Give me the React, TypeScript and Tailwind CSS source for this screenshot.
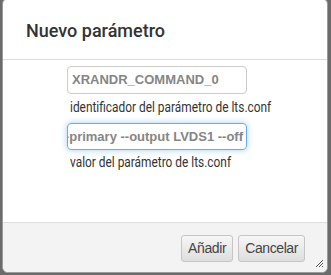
const App = () => {
  return (
    <div className="w-[331px] h-[275px] bg-[#6b6b6b] relative overflow-hidden" style={{ fontFamily: "Roboto, 'Liberation Sans', sans-serif" }}>
      <div className="absolute left-[2px] top-[-2px] w-[326px] h-[275px] bg-white border border-[#9a9a9a] rounded-[6px] flex flex-col overflow-hidden">
        <div className="h-[61px] border-b border-[#dddddd] flex items-center px-[23px] pt-[2px]">
          <h3 className="text-[18px] text-[#333333] font-medium">Nuevo parámetro</h3>
        </div>
        <div className="flex-1 pl-[64px] pt-[6px]">
          <div className="w-[180px] h-[28px] border border-[#cccccc] rounded-[4px] flex items-center px-[4px] text-[13px] font-bold text-[#858585]" style={{ fontFamily: "'Liberation Sans', Arial, sans-serif" }}>
            XRANDR_COMMAND_0
          </div>
          <p className="text-[14.5px] text-[#333333] mt-[5px] ml-[3px] leading-[18px] whitespace-nowrap origin-left scale-x-[0.82]">identificador del parámetro de lts.conf</p>
          <div className="mt-[6px] w-[180px] h-[27px] border border-[#66afe9] rounded-[4px] shadow-[0_0_6px_rgba(102,175,233,0.6)] flex items-center justify-end overflow-hidden pr-[3px] whitespace-nowrap text-[13px] font-bold text-[#858585]" style={{ fontFamily: "'Liberation Sans', Arial, sans-serif" }}>
            --output VGA1 --primary --output LVDS1 --off
          </div>
          <p className="text-[14.5px] text-[#333333] mt-[4px] ml-[3px] leading-[18px] whitespace-nowrap origin-left scale-x-[0.82]">valor del parámetro de lts.conf</p>
        </div>
        <div className="h-[50px] bg-[#f3f3f3] border-t border-[#dddddd] flex items-start justify-end gap-[5px] pr-[22px] pt-[12px] relative">
          <button className="h-[27px] px-[6px] border border-[#c5c5c5] rounded-[3px] bg-gradient-to-b from-[#f6f6f6] to-[#dedede] text-[14px] tracking-[-0.4px] text-[#454545]" style={{ fontFamily: "'Liberation Sans', Arial, sans-serif" }}>Añadir</button>
          <button className="h-[27px] px-[6px] border border-[#c5c5c5] rounded-[3px] bg-gradient-to-b from-[#f6f6f6] to-[#dedede] text-[14px] tracking-[-0.4px] text-[#454545]" style={{ fontFamily: "'Liberation Sans', Arial, sans-serif" }}>Cancelar</button>
          <svg className="absolute right-[3px] bottom-[4px]" width="9" height="9" viewBox="0 0 9 9">
            <path d="M8 1L1 8M8 4L4 8M8 7L7 8" stroke="#555" strokeWidth="1" />
          </svg>
        </div>
      </div>
    </div>
  );
};

export default App;
